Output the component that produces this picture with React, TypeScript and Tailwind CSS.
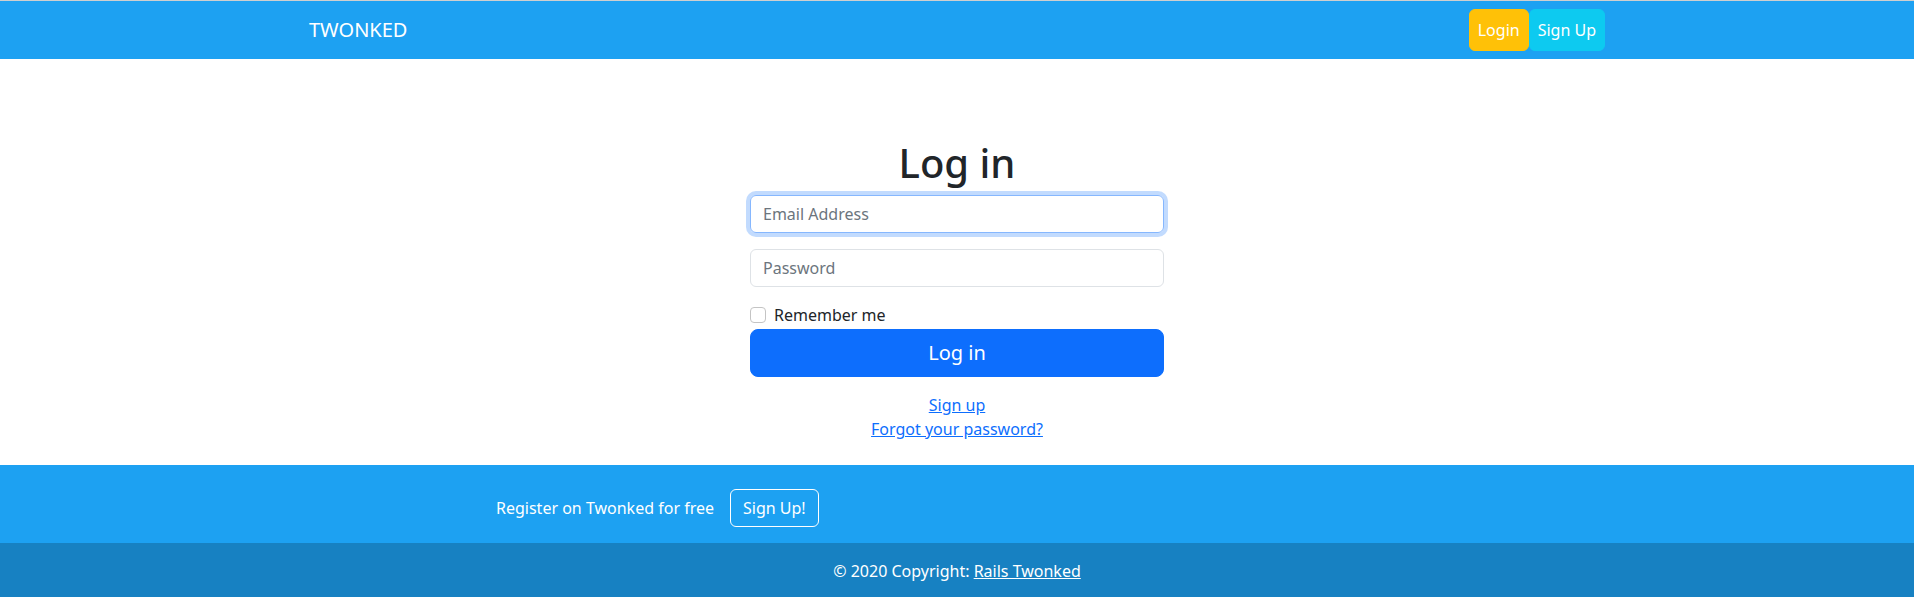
import { useState } from "react";

export default function App() {
  const [remember, setRemember] = useState(false);

  return (
    <div className="min-h-screen bg-white font-['Noto_Sans','Liberation_Sans',sans-serif] text-base text-[#212529]">
      {/* Navbar */}
      <header className="border-t border-[#cfcfcf] bg-[#1da1f2]">
        <nav className="mx-auto flex max-w-[1320px] items-center justify-between px-3 py-2">
          <a href="#" className="py-[5px] text-xl leading-[30px] text-white">
            TWONKED
          </a>
          <div className="flex">
            <a
              href="#"
              className="rounded-md border border-[#ffc107] bg-[#ffc107] px-2 py-2 leading-6 text-white"
            >
              Login
            </a>
            <a
              href="#"
              className="rounded-md border border-[#0dcaf0] bg-[#0dcaf0] px-2 py-2 leading-6 text-white"
            >
              Sign Up
            </a>
          </div>
        </nav>
      </header>

      {/* Login form */}
      <main className="pt-[80px] pb-[24px]">
        <div className="mx-auto w-[414px]">
          <h1 className="mb-2 text-center text-[40px] leading-[48px] font-medium">Log in</h1>
          <form onSubmit={(e) => e.preventDefault()}>
            <div className="mb-4">
              <input
                type="email"
                autoFocus
                placeholder="Email Address"
                className="block h-[38px] w-full rounded-md border border-[#86b7fe] px-3 py-1.5 leading-6 caret-black shadow-[0_0_0_4px_rgba(13,110,253,0.25)] outline-none placeholder:text-[#6c757d]"
              />
            </div>
            <div className="mb-4">
              <input
                type="password"
                placeholder="Password"
                className="block h-[38px] w-full rounded-md border border-[#dee2e6] px-3 py-1.5 leading-6 outline-none placeholder:text-[#6c757d]"
              />
            </div>
            <label className="mb-0.5 flex items-start gap-2 leading-6">
              <input
                type="checkbox"
                checked={remember}
                onChange={(e) => setRemember(e.target.checked)}
                className="mt-1 h-4 w-4 appearance-none rounded border border-[#c4c4c4] bg-white checked:bg-[#0d6efd]"
              />
              <span>Remember me</span>
            </label>
            <button
              type="submit"
              className="block h-12 w-full rounded-lg border border-[#0d6efd] bg-[#0d6efd] px-4 py-2 text-xl leading-[30px] text-white"
            >
              Log in
            </button>
          </form>
          <div className="mt-4 flex flex-col items-center leading-6">
            <a href="#" className="text-[#0d6efd] underline">
              Sign up
            </a>
            <a href="#" className="text-[#0d6efd] underline">
              Forgot your password?
            </a>
          </div>
        </div>
      </main>

      {/* Footer */}
      <footer className="bg-[#1da1f2] text-white">
        <section className="mx-auto max-w-[1320px] px-3 pt-6 pb-4">
          <div className="flex items-center pl-[187px]">
            <span className="mr-4 leading-6">Register on Twonked for free</span>
            <button className="rounded-md border border-white px-3 py-1.5 leading-6 text-white">
              Sign Up!
            </button>
          </div>
        </section>
        <div className="bg-[#1781c2] py-4 text-center leading-6">
          © 2020 Copyright:{" "}
          <a href="#" className="text-white underline">
            Rails Twonked
          </a>
        </div>
      </footer>
    </div>
  );
}
